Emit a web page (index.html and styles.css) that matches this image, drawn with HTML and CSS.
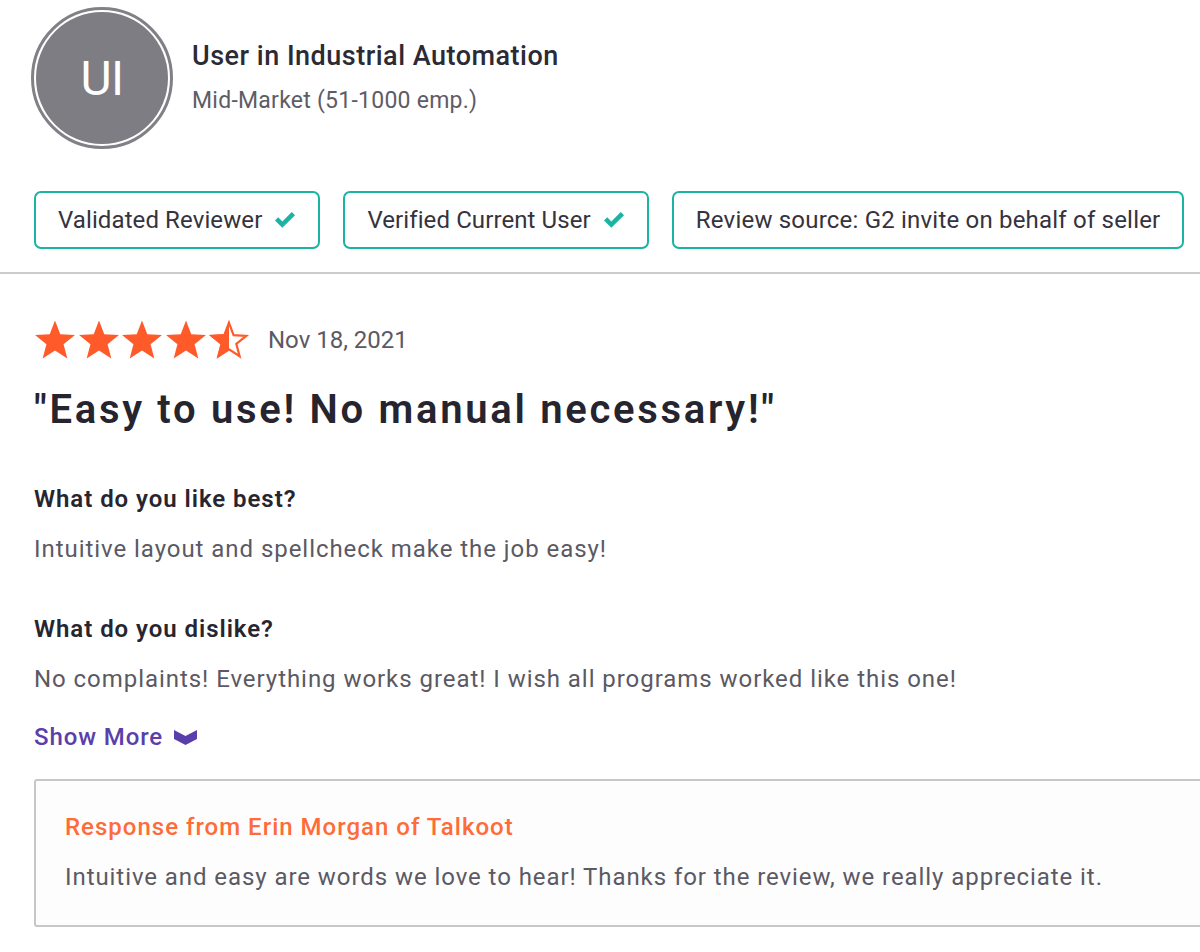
FILE: index.html
```html
<!DOCTYPE html>
<html lang="en">
<head>
<meta charset="utf-8">
<title>Review</title>
<link rel="stylesheet" href="styles.css">
</head>
<body>
<div class="page">
  <section class="reviewer-block">
    <div class="reviewer">
      <div class="avatar"><span class="avatar-inner">UI</span></div>
      <div class="reviewer-info">
        <div class="name">User in Industrial Automation</div>
        <div class="segment">Mid-Market (51-1000 emp.)</div>
      </div>
    </div>
    <div class="badges">
      <div class="badge">Validated Reviewer
        <svg class="check" viewBox="0 0 22 16" width="22" height="16"><path d="M1 8.5 L4.2 5.3 L8.3 9.4 L17.8 0 L21 3.2 L8.3 15.8 Z" fill="#1bb3a3"/></svg>
      </div>
      <div class="badge">Verified Current User
        <svg class="check" viewBox="0 0 22 16" width="22" height="16"><path d="M1 8.5 L4.2 5.3 L8.3 9.4 L17.8 0 L21 3.2 L8.3 15.8 Z" fill="#1bb3a3"/></svg>
      </div>
      <div class="badge badge-wide">Review source: G2 invite on behalf of seller</div>
    </div>
  </section>
  <div class="divider"></div>
  <section class="review">
    <div class="rating-row">
      <div class="stars">
        <svg class="star" viewBox="0 0 42 40" width="42" height="40"><polygon points="21,0.5 26.29,14.22 40.97,15.01 29.56,24.28 33.34,38.49 21,30.5 8.66,38.49 12.44,24.28 1.03,15.01 15.71,14.22" fill="#ff5b2a"/></svg>
        <svg class="star" viewBox="0 0 42 40" width="42" height="40"><polygon points="21,0.5 26.29,14.22 40.97,15.01 29.56,24.28 33.34,38.49 21,30.5 8.66,38.49 12.44,24.28 1.03,15.01 15.71,14.22" fill="#ff5b2a"/></svg>
        <svg class="star" viewBox="0 0 42 40" width="42" height="40"><polygon points="21,0.5 26.29,14.22 40.97,15.01 29.56,24.28 33.34,38.49 21,30.5 8.66,38.49 12.44,24.28 1.03,15.01 15.71,14.22" fill="#ff5b2a"/></svg>
        <svg class="star" viewBox="0 0 42 40" width="42" height="40"><polygon points="21,0.5 26.29,14.22 40.97,15.01 29.56,24.28 33.34,38.49 21,30.5 8.66,38.49 12.44,24.28 1.03,15.01 15.71,14.22" fill="#ff5b2a"/></svg>
        <svg class="star" viewBox="0 0 42 40" width="42" height="40">
          <defs><clipPath id="half"><rect x="0" y="0" width="21" height="40"/></clipPath></defs>
          <polygon points="21,0.5 26.29,14.22 40.97,15.01 29.56,24.28 33.34,38.49 21,30.5 8.66,38.49 12.44,24.28 1.03,15.01 15.71,14.22" fill="#ff5b2a" clip-path="url(#half)"/>
          <polygon points="21,2.8 25.6,15.2 38.2,15.9 28.3,23.9 31.6,36.2 21,29.3 10.4,36.2 13.7,23.9 3.8,15.9 16.4,15.2" fill="none" stroke="#ff5b2a" stroke-width="2.2"/>
        </svg>
      </div>
      <span class="date">Nov 18, 2021</span>
    </div>
    <h1 class="title">"Easy to use! No manual necessary!"</h1>
    <div class="qa">
      <h3 class="question">What do you like best?</h3>
      <p class="answer">Intuitive layout and spellcheck make the job easy!</p>
    </div>
    <div class="qa">
      <h3 class="question">What do you dislike?</h3>
      <p class="answer">No complaints! Everything works great! I wish all programs worked like this one!</p>
    </div>
    <a class="show-more" href="#">Show More
      <svg class="chevron" viewBox="0 0 23 15" width="23" height="15"><polygon points="0,0 11.5,6 23,0 23,9 11.5,15 0,9" fill="#5a3fab"/></svg>
    </a>
    <div class="response">
      <div class="response-title">Response from Erin Morgan of Talkoot</div>
      <p class="response-text">Intuitive and easy are words we love to hear! Thanks for the review, we really appreciate it.</p>
    </div>
  </section>
</div>
</body>
</html>
```

FILE: styles.css
```css
html, body {
  margin: 0;
  padding: 0;
  background: #ffffff;
  overflow: hidden;
}
body {
  font-family: Roboto, "Liberation Sans", sans-serif;
  color: #2a2832;
}
.page {
  width: 1200px;
}
.reviewer-block {
  padding: 7px 0 0 31px;
}
.reviewer {
  display: flex;
  align-items: center;
  gap: 19px;
}
.avatar {
  width: 142px;
  height: 142px;
  box-sizing: border-box;
  border-radius: 50%;
  border: 3px solid #808087;
  padding: 2px;
  background: #ffffff;
}
.avatar-inner {
  display: flex;
  align-items: center;
  justify-content: center;
  width: 100%;
  height: 100%;
  border-radius: 50%;
  background: #7e7d84;
  color: #ffffff;
  font-size: 48px;
  font-weight: 400;
  letter-spacing: -0.5px;
}
.reviewer-info {
  display: flex;
  flex-direction: column;
  gap: 16px;
}
.name {
  font-size: 27px;
  line-height: 30px;
  font-weight: 500;
  letter-spacing: 0.5px;
  color: #2c2a34;
}
.segment {
  font-size: 23px;
  line-height: 28px;
  letter-spacing: 0.25px;
  color: #5e5c66;
}
.badges {
  display: flex;
  gap: 23px;
  margin-top: 42px;
  padding-left: 3px;
}
.badge {
  display: flex;
  align-items: center;
  gap: 12px;
  height: 58px;
  box-sizing: border-box;
  padding: 0 22px;
  border: 2px solid #1bb3a3;
  border-radius: 7px;
  font-size: 24px;
  letter-spacing: 0.1px;
  color: #35333d;
}
.badge-wide {
  letter-spacing: 0.2px;
}
.check {
  display: block;
}
.divider {
  height: 2px;
  background: #cbcbcd;
  margin-top: 23px;
}
.review {
  padding-left: 34px;
}
.rating-row {
  display: flex;
  align-items: center;
  margin-top: 46px;
}
.stars {
  display: flex;
  gap: 1.5px;
}
.star {
  display: block;
}
.date {
  margin-left: 18px;
  font-size: 24px;
  color: #5b5964;
}
.title {
  margin: 26px 0 0;
  font-size: 40px;
  line-height: 48px;
  font-weight: 600;
  letter-spacing: 2.7px;
  color: #26242e;
}
.qa {
  margin-top: 50px;
}
.qa + .qa {
  margin-top: 50px;
}
.question {
  margin: 0;
  font-size: 24px;
  line-height: 30px;
  font-weight: 600;
  letter-spacing: 0.95px;
  color: #27252f;
}
.answer {
  margin: 20px 0 0;
  font-size: 24px;
  line-height: 30px;
  letter-spacing: 0.95px;
  color: #5b5963;
}
.show-more {
  display: inline-flex;
  align-items: center;
  gap: 11px;
  margin-top: 28px;
  font-size: 24px;
  line-height: 30px;
  font-weight: 500;
  letter-spacing: 0.9px;
  color: #5a3fab;
  text-decoration: none;
}
.chevron {
  display: block;
}
.response {
  margin-top: 27px;
  margin-right: -30px;
  border: 2px solid #c7c7c9;
  border-radius: 3px;
  background: #fdfdfd;
  padding: 31px 29px 33px 29px;
}
.response-title {
  font-size: 24px;
  line-height: 30px;
  font-weight: 500;
  letter-spacing: 1px;
  color: #ff6b39;
}
.response-text {
  margin: 20px 0 0;
  font-size: 24px;
  line-height: 30px;
  letter-spacing: 0.93px;
  color: #5b5963;
}
```
